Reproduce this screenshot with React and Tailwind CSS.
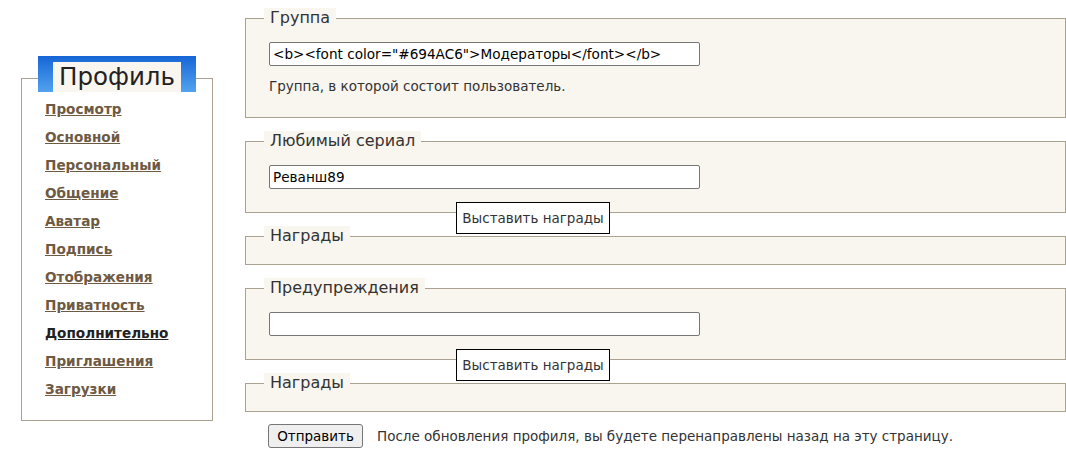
import React from "react";

const links = [
  "Просмотр",
  "Основной",
  "Персональный",
  "Общение",
  "Аватар",
  "Подпись",
  "Отображения",
  "Приватность",
  "Дополнительно",
  "Приглашения",
  "Загрузки",
];

function Legend({ children }) {
  return (
    <legend className="-ml-[5px] px-[6px] bg-[#f9f6f0] text-[16px] leading-[20px] text-[#333]">
      {children}
    </legend>
  );
}

function Input({ value }) {
  return (
    <input
      type="text"
      readOnly
      value={value}
      className="mt-[14px] block w-[431px] h-[24px] px-[3px] bg-white border border-[#767676] rounded-[2px] text-[13.6px] text-black outline-none"
      style={{ fontFamily: '"DejaVu Sans", Verdana, sans-serif' }}
    />
  );
}

function Tip() {
  return (
    <div className="absolute left-[211px] -top-[24px] w-[154px] h-[32px] bg-white border border-black flex items-center justify-center text-[13.5px] text-[#333] z-10">
      Выставить награды
    </div>
  );
}

function Awards({ className }) {
  return (
    <div className={"relative " + className}>
      <Tip />
      <fieldset className="border border-[#aaa190] bg-[#f9f6f0] px-[23px] pb-[18px]">
        <Legend>Награды</Legend>
      </fieldset>
    </div>
  );
}

export default function App() {
  return (
    <div
      className="w-[1066px] h-[457px] bg-white flex text-[#333] overflow-hidden"
      style={{ fontFamily: '"DejaVu Sans", Verdana, sans-serif' }}
    >
      <div className="ml-[21px] mt-[56px] w-[192px] flex flex-col">
        <div className="relative z-10 ml-[17px] w-[158px] h-[36px] bg-gradient-to-b from-[#1565d6] to-[#52a2ef] pl-[15px] pt-[6px]">
          <div className="w-[128px] h-[30px] bg-[#f9f6f0] pl-[6px] text-[24.5px] leading-[30px] text-[#222]">
            Профиль
          </div>
        </div>
        <div className="-mt-[14px] h-[343px] border border-[#aaa190] pl-[23px] pt-[16px]">
          {links.map((l) => (
            <div key={l} className="h-[28px] flex items-center">
              <a
                href="#"
                className={
                  "text-[13.6px] font-bold underline " +
                  (l === "Дополнительно" ? "text-[#222]" : "text-[#6e5a43]")
                }
              >
                {l}
              </a>
            </div>
          ))}
        </div>
      </div>

      <div className="ml-[32px] pt-[8px] w-[821px] flex flex-col">
        <fieldset className="border border-[#aaa190] bg-[#f9f6f0] px-[23px] pb-[23px] mb-[13px]">
          <Legend>Группа</Legend>
          <Input value={'<b><font color="#694AC6">Модераторы</font></b>'} />
          <p className="mt-[12px] text-[13.5px] leading-[16px] text-[#333]">
            Группа, в которой состоит пользователь.
          </p>
        </fieldset>

        <fieldset className="border border-[#aaa190] bg-[#f9f6f0] px-[23px] pb-[23px] mb-[13px]">
          <Legend>Любимый сериал</Legend>
          <Input value="Реванш89" />
        </fieldset>

        <Awards className="mb-[13px]" />

        <fieldset className="border border-[#aaa190] bg-[#f9f6f0] px-[23px] pb-[23px] mb-[13px]">
          <Legend>Предупреждения</Legend>
          <Input value="" />
        </fieldset>

        <Awards className="" />

        <div className="mt-[12px] ml-[23px] flex items-center">
          <button className="w-[95px] h-[24px] bg-[#efefef] border border-[#767676] rounded-[3px] text-[13.5px] text-black">
            Отправить
          </button>
          <span className="ml-[14px] text-[13.5px] text-[#333]">
            После обновления профиля, вы будете перенаправлены назад на эту страницу.
          </span>
        </div>
      </div>
    </div>
  );
}
